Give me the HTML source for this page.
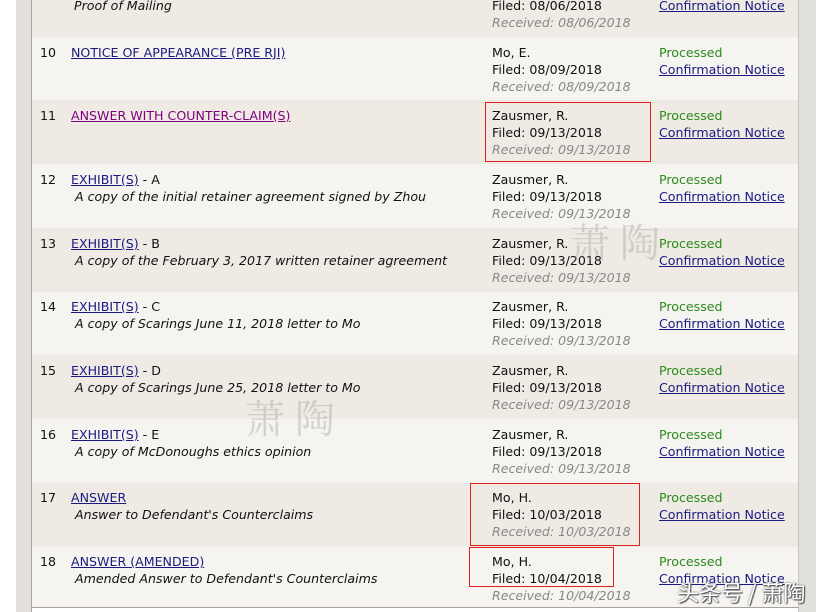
<!DOCTYPE html>
<html><head><meta charset="utf-8"><style>
body{margin:0;width:829px;height:612px;background:#fff;position:relative;overflow:hidden;font-family:"DejaVu Sans","Liberation Sans",sans-serif;font-size:12.6px;color:#111}
.lg{position:absolute;left:16px;top:0;width:15px;height:612px;background:#e2e0dc;border-right:1px solid #a8a49c}
.rg{position:absolute;left:798px;top:0;width:17px;height:612px;background:#e2e0dc;border-left:1px solid #c8c4bc}
.bt{position:absolute;left:31px;top:607px;width:767px;height:1px;background:#a8a49c}
.row{position:absolute;left:32px;width:766px}
.a{background:#efebe4}.b{background:#f6f4f1}
.t{position:absolute;line-height:17px;white-space:nowrap}
a{color:#1a1a80;text-decoration:underline}
a.v{color:#800080}
i{font-style:italic}
.g{color:#888;font-style:italic}
.p{color:#2a8a1a}
.box{position:absolute;border:1px solid #d22}
.wm{position:absolute;color:rgba(150,150,150,.35);font-family:"Noto Serif CJK SC",serif;font-size:40px;letter-spacing:10px}
</style></head><body>
<div class="lg"></div><div class="rg"></div><div class="bt"></div>
<div class="row a" style="top:0;height:37px"><div class="t" style="left:42px;top:-3px"><i>Proof of Mailing</i></div><div class="t" style="left:460px;top:-3px">Filed: 08/06/2018<br><span class="g">Received: 08/06/2018</span></div><div class="t" style="left:627px;top:-3px"><a>Confirmation Notice</a></div></div>

<div class="row b" style="top:37px;height:63px"><div class="t" style="left:8px;top:7px">10</div><div class="t" style="left:39px;top:7px"><a>NOTICE OF APPEARANCE (PRE RJI)</a></div><div class="t" style="left:460px;top:7px">Mo, E.<br>Filed: 08/09/2018<br><span class="g">Received: 08/09/2018</span></div><div class="t" style="left:627px;top:7px"><span class="p">Processed</span><br><a>Confirmation Notice</a></div></div>

<div class="row a" style="top:100px;height:64px"><div class="t" style="left:8px;top:7px">11</div><div class="t" style="left:39px;top:7px"><a class="v">ANSWER WITH COUNTER-CLAIM(S)</a></div><div class="t" style="left:460px;top:7px">Zausmer, R.<br>Filed: 09/13/2018<br><span class="g">Received: 09/13/2018</span></div><div class="t" style="left:627px;top:7px"><span class="p">Processed</span><br><a>Confirmation Notice</a></div></div>

<div class="row b" style="top:164px;height:64px"><div class="t" style="left:8px;top:7px">12</div><div class="t" style="left:39px;top:7px"><a>EXHIBIT(S)</a> - A<br>&nbsp;<i>A copy of the initial retainer agreement signed by Zhou</i></div><div class="t" style="left:460px;top:7px">Zausmer, R.<br>Filed: 09/13/2018<br><span class="g">Received: 09/13/2018</span></div><div class="t" style="left:627px;top:7px"><span class="p">Processed</span><br><a>Confirmation Notice</a></div></div>

<div class="row a" style="top:228px;height:64px"><div class="t" style="left:8px;top:7px">13</div><div class="t" style="left:39px;top:7px"><a>EXHIBIT(S)</a> - B<br>&nbsp;<i>A copy of the February 3, 2017 written retainer agreement</i></div><div class="t" style="left:460px;top:7px">Zausmer, R.<br>Filed: 09/13/2018<br><span class="g">Received: 09/13/2018</span></div><div class="t" style="left:627px;top:7px"><span class="p">Processed</span><br><a>Confirmation Notice</a></div></div>

<div class="row b" style="top:292px;height:63px"><div class="t" style="left:8px;top:6px">14</div><div class="t" style="left:39px;top:6px"><a>EXHIBIT(S)</a> - C<br>&nbsp;<i>A copy of Scarings June 11, 2018 letter to Mo</i></div><div class="t" style="left:460px;top:6px">Zausmer, R.<br>Filed: 09/13/2018<br><span class="g">Received: 09/13/2018</span></div><div class="t" style="left:627px;top:6px"><span class="p">Processed</span><br><a>Confirmation Notice</a></div></div>

<div class="row a" style="top:355px;height:64px"><div class="t" style="left:8px;top:7px">15</div><div class="t" style="left:39px;top:7px"><a>EXHIBIT(S)</a> - D<br>&nbsp;<i>A copy of Scarings June 25, 2018 letter to Mo</i></div><div class="t" style="left:460px;top:7px">Zausmer, R.<br>Filed: 09/13/2018<br><span class="g">Received: 09/13/2018</span></div><div class="t" style="left:627px;top:7px"><span class="p">Processed</span><br><a>Confirmation Notice</a></div></div>

<div class="row b" style="top:419px;height:64px"><div class="t" style="left:8px;top:7px">16</div><div class="t" style="left:39px;top:7px"><a>EXHIBIT(S)</a> - E<br>&nbsp;<i>A copy of McDonoughs ethics opinion</i></div><div class="t" style="left:460px;top:7px">Zausmer, R.<br>Filed: 09/13/2018<br><span class="g">Received: 09/13/2018</span></div><div class="t" style="left:627px;top:7px"><span class="p">Processed</span><br><a>Confirmation Notice</a></div></div>

<div class="row a" style="top:483px;height:64px"><div class="t" style="left:8px;top:6px">17</div><div class="t" style="left:39px;top:6px"><a>ANSWER</a><br>&nbsp;<i>Answer to Defendant's Counterclaims</i></div><div class="t" style="left:460px;top:6px">Mo, H.<br>Filed: 10/03/2018<br><span class="g">Received: 10/03/2018</span></div><div class="t" style="left:627px;top:6px"><span class="p">Processed</span><br><a>Confirmation Notice</a></div></div>

<div class="row b" style="top:547px;height:60px"><div class="t" style="left:8px;top:6px">18</div><div class="t" style="left:39px;top:6px"><a>ANSWER (AMENDED)</a><br>&nbsp;<i>Amended Answer to Defendant's Counterclaims</i></div><div class="t" style="left:460px;top:6px">Mo, H.<br>Filed: 10/04/2018<br><span class="g">Received: 10/04/2018</span></div><div class="t" style="left:627px;top:6px"><span class="p">Processed</span><br><a>Confirmation Notice</a></div></div>

<div class="box" style="left:485px;top:102px;width:164px;height:58px"></div>
<div class="box" style="left:470px;top:483px;width:168px;height:61px"></div>
<div class="box" style="left:469px;top:547px;width:143px;height:38px"></div>

<div class="wm" style="left:570px;top:212px">萧陶</div>
<div class="wm" style="left:245px;top:388px">萧陶</div>
<div style="position:absolute;left:677px;top:576px;font-family:'Noto Sans CJK SC',sans-serif;font-size:22px;color:#fff;text-shadow:0 0 2px #555,1px 1px 1px #444">头条号 / 萧陶</div>
</body></html>
